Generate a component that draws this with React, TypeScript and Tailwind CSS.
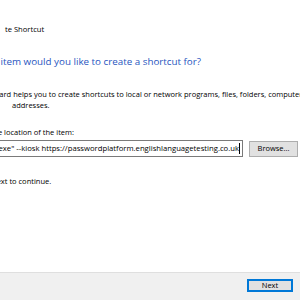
import React from 'react'

const App: React.FC = () => {
    const target =
        '"C:\\Program Files (x86)\\Google\\Chrome\\Application\\chrome.exe" --kiosk https://passwordplatform.englishlanguagetesting.co.uk'

    return (
        <div className="w-[300px] h-[300px] overflow-hidden bg-white flex flex-col text-black font-['Open_Sans',sans-serif]">
            <div className="flex-1 overflow-hidden">
                {/* caption, only the tail of it is visible in the crop */}
                <div className="ml-[5px] mt-[23px] text-[7.6px] leading-[12px] whitespace-nowrap">te Shortcut</div>

                <div className="ml-[-26px] mt-[20px] text-[9.8px] leading-[14px] text-[#1f55c0] whitespace-nowrap">
                    What item would you like to create a shortcut for?
                </div>

                <div className="mt-[20px] text-[7.5px] leading-[10.5px] whitespace-nowrap">
                    <div className="ml-[-28px]">
                        This wizard helps you to create shortcuts to local or network programs, files, folders, computers, or Internet
                    </div>
                    <div className="ml-[12px]">addresses.</div>
                </div>

                <div className="ml-[-28px] mt-[16px] text-[7.5px] leading-[12px] whitespace-nowrap">Type the location of the item:</div>

                <div className="flex items-center gap-[6px] mt-[2px] ml-[-29px]">
                    <div className="w-[272px] h-[17px] shrink-0 border border-[#7a7a7a] flex items-center justify-end overflow-hidden pr-[2px] text-[7.7px] whitespace-nowrap">
                        <span>{target}</span>
                        <span className="w-px h-[11px] bg-black shrink-0" />
                    </div>
                    <div className="w-[49px] h-[16px] shrink-0 bg-[#e1e1e1] border border-[#adadad] flex items-center justify-center text-[7.5px]">
                        Browse...
                    </div>
                </div>

                <div className="ml-[-27px] mt-[18px] text-[7.5px] leading-[12px] whitespace-nowrap">Click Next to continue.</div>
            </div>

            <div className="h-[28px] bg-[#f0f0f0] border-t border-[#dfdfdf] flex items-start justify-end pt-[6px] pr-[7px]">
                <div className="w-[46px] h-[13px] bg-[#e1e1e1] border-2 border-[#0078d7] flex items-center justify-center text-[7.5px]">
                    Next
                </div>
            </div>
        </div>
    )
}

export default App
